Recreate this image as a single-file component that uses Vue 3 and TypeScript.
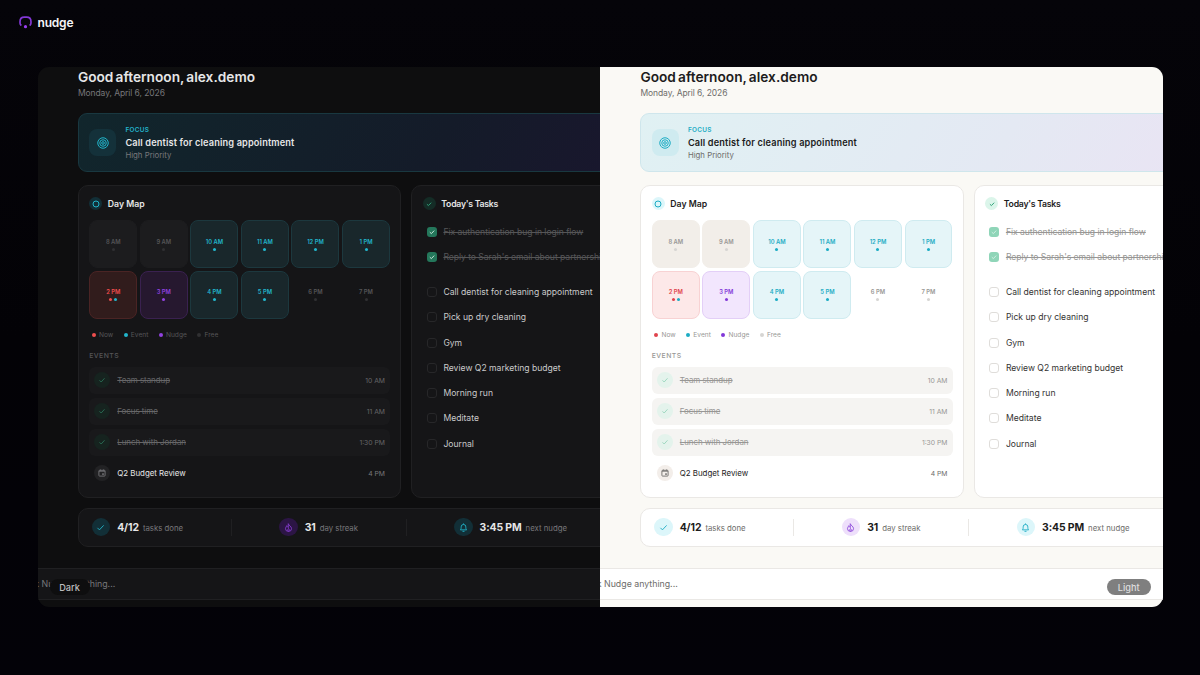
<script setup lang="ts">
interface Slot { label: string; kind: 'past' | 'event' | 'now' | 'nudge' | 'free' }

const themes = ['dark', 'light'] as const

const slots: Slot[] = [
  { label: '8 AM', kind: 'past' },
  { label: '9 AM', kind: 'past' },
  { label: '10 AM', kind: 'event' },
  { label: '11 AM', kind: 'event' },
  { label: '12 PM', kind: 'event' },
  { label: '1 PM', kind: 'event' },
  { label: '2 PM', kind: 'now' },
  { label: '3 PM', kind: 'nudge' },
  { label: '4 PM', kind: 'event' },
  { label: '5 PM', kind: 'event' },
  { label: '6 PM', kind: 'free' },
  { label: '7 PM', kind: 'free' },
]

const legend = [
  { label: 'Now', kind: 'now' },
  { label: 'Event', kind: 'event' },
  { label: 'Nudge', kind: 'nudge' },
  { label: 'Free', kind: 'free' },
]

const events = [
  { title: 'Team standup', time: '10 AM', done: true },
  { title: 'Focus time', time: '11 AM', done: true },
  { title: 'Lunch with Jordan', time: '1:30 PM', done: true },
  { title: 'Q2 Budget Review', time: '4 PM', done: false },
]

const doneTasks = ['Fix authentication bug in login flow', "Reply to Sarah's email about partnership"]
const openTasks = [
  'Call dentist for cleaning appointment',
  'Pick up dry cleaning',
  'Gym',
  'Review Q2 marketing budget',
  'Morning run',
  'Meditate',
  'Journal',
]
</script>

<template>
  <div class="page">
    <header class="brand">
      <svg class="brand-mark" viewBox="0 0 14 14" fill="none">
        <path d="M2 9.7 C1.4 9.2 1.1 8.5 1.1 7.6 V6 C1.1 3 3 1.2 5.7 1.2 H8.3 C11 1.2 12.9 3 12.9 6 V7.6 C12.9 8.5 12.6 9.2 12 9.7" stroke="#8338d6" stroke-width="1.8" stroke-linecap="round" />
        <circle cx="7" cy="11.5" r="1.7" fill="#9a3ff0" />
      </svg>
      <span class="brand-name">nudge</span>
    </header>

    <main class="stage">
      <section v-for="theme in themes" :key="theme" class="panel" :class="theme">
        <div class="content">
          <h1 class="greeting">Good afternoon, alex.demo</h1>
          <p class="date">Monday, April 6, 2026</p>

          <div class="focus">
            <span class="focus-icon">
              <svg viewBox="0 0 24 24" fill="none" stroke="currentColor" stroke-width="2">
                <circle cx="12" cy="12" r="10.5" /><circle cx="12" cy="12" r="6.5" /><circle cx="12" cy="12" r="2.6" />
              </svg>
            </span>
            <div class="focus-text">
              <span class="eyebrow">FOCUS</span>
              <strong class="focus-title">Call dentist for cleaning appointment</strong>
              <span class="focus-sub">High Priority</span>
            </div>
          </div>

          <div class="columns">
            <article class="card">
              <div class="card-head">
                <span class="badge cyan"><svg viewBox="0 0 12 12" fill="none" stroke="currentColor" stroke-width="1"><circle cx="6" cy="6" r="3" /></svg></span>
                <h2>Day Map</h2>
              </div>
              <div class="slots">
                <div v-for="slot in slots" :key="slot.label" class="slot" :class="slot.kind">
                  <span class="slot-label">{{ slot.label }}</span>
                  <span class="dots"><i class="dot" :class="slot.kind"></i><i v-if="slot.kind === 'now'" class="dot event"></i></span>
                </div>
              </div>
              <div class="legend">
                <span v-for="item in legend" :key="item.label" class="legend-item"><i class="dot" :class="item.kind"></i>{{ item.label }}</span>
              </div>
              <h3 class="events-title">EVENTS</h3>
              <ul class="events">
                <li v-for="event in events" :key="event.title" :class="{ done: event.done }">
                  <span class="event-icon">
                    <svg v-if="event.done" viewBox="0 0 16 16" fill="none" stroke="currentColor" stroke-width="1.7"><path d="M3 8.6 6.3 12 13 4.6" /></svg>
                    <svg v-else viewBox="0 0 16 16" fill="none" stroke="currentColor" stroke-width="1.8"><rect x="1.8" y="2.6" width="12.4" height="11.6" rx="1.4" /><path d="M2 4.4H14M4.8 1V3M11.2 1V3" /><rect x="8.4" y="8.6" width="3.2" height="3.2" fill="currentColor" stroke="none" /></svg>
                  </span>
                  <span class="event-title">{{ event.title }}</span>
                  <span class="event-time">{{ event.time }}</span>
                </li>
              </ul>
            </article>

            <article class="card">
              <div class="card-head">
                <span class="badge green"><svg viewBox="0 0 12 12" fill="none" stroke="currentColor" stroke-width="1"><path d="M3.9 6.2 5.4 7.6 8.2 4.7" /></svg></span>
                <h2 class="tight">Today's Tasks</h2>
              </div>
              <ul class="tasks finished">
                <li v-for="task in doneTasks" :key="task">
                  <span class="check on"><svg viewBox="0 0 10 10" fill="none" stroke="currentColor" stroke-width="0.9"><path d="M2.8 5.2 4.4 6.6 7.2 3.6" /></svg></span>
                  <span class="task-text">{{ task }}</span>
                </li>
              </ul>
              <ul class="tasks">
                <li v-for="task in openTasks" :key="task">
                  <span class="check"></span>
                  <span class="task-text">{{ task }}</span>
                </li>
              </ul>
            </article>
          </div>

          <div class="stats">
            <div class="stat">
              <span class="stat-icon cyan"><svg viewBox="0 0 16 16" fill="none" stroke="currentColor" stroke-width="1.6"><path d="M2.6 8.6 6.1 12.2 13.6 4.2" /></svg></span>
              <b>4/12</b><span class="stat-label">tasks done</span>
            </div>
            <i class="divider"></i>
            <div class="stat">
              <span class="stat-icon purple"><svg viewBox="0 0 16 16" fill="none" stroke="currentColor" stroke-width="1.4" stroke-linejoin="round"><path d="M7.6 1.2C8 4.2 13.4 5.8 13.4 10A5.4 5 0 0 1 2.6 10C2.6 7.4 4.6 6.4 5.2 4.6 6.8 5.4 6.2 7.4 7.6 8.2 8.6 6 7.2 3.6 7.6 1.2Z" /><path d="M8 14.8C6 13.4 6.6 11.4 8 9.8 9.6 11.4 10 13.4 8 14.8Z" /></svg></span>
              <b>31</b><span class="stat-label">day streak</span>
            </div>
            <i class="divider"></i>
            <div class="stat">
              <span class="stat-icon cyan"><svg viewBox="0 0 16 16" fill="none" stroke="currentColor" stroke-width="1.6" stroke-linejoin="round"><path d="M2.4 12.2C4 10.8 3.8 9 3.8 7A4.2 4.4 0 0 1 12.2 7C12.2 9 12 10.8 13.6 12.2ZM6.2 14.8H9.8M8 .8V2.6" /></svg></span>
              <b>3:45 PM</b><span class="stat-label">next nudge</span>
            </div>
            <i class="divider"></i>
          </div>
        </div>
        <footer class="ask"><span class="ask-text">Ask Nudge anything...</span></footer>
      </section>
      <span class="tag tag-dark">Dark</span>
      <span class="tag tag-light">Light</span>
    </main>
  </div>
</template>

<style>
body { margin: 0; background: #030207; }
</style>

<style scoped>
* { box-sizing: border-box; }
h1, h2, h3, p, ul { margin: 0; padding: 0; font-weight: inherit; }
ul { list-style: none; }
svg { display: block; }

.page { width: 1200px; height: 675px; overflow: hidden; background: linear-gradient(#050409, #030206 50%, #030208); font-family: Inter, "Open Sans", sans-serif; }
.brand { display: flex; align-items: center; height: 45px; padding-left: 19px; gap: 5.5px; }
.brand-mark { width: 13px; height: 13px; margin-top: -1px; }
.brand-name { color: #f6f5f8; font-size: 12px; font-weight: 600; letter-spacing: -0.2px; }

.stage { position: relative; display: flex; width: 1125px; height: 540.4px; margin: 22px 37.5px 0; border-radius: 11px; overflow: hidden; }
.panel { display: flex; flex-direction: column; width: 562.5px; height: 541px; overflow: hidden; background: var(--bg); color: var(--fg); }

.dark {
  --bg: #0e0e0f; --card: #151517; --line: #202022; --fg: #e6e6e7; --body: #cacacb; --muted: #77777a; --faint: #555557;
  --cyan: #22b5cb; --purple: #9142e0; --red: #ef4e4e; --green: #2f9c76;
  --cyan-bg: #122f37; --purple-bg: #2c1545; --green-bg: #142c26;
  --past: #1c1c1e; --past-line: #1c1c1e; --event: #19272b; --event-line: #1c383e; --now: #311c1c; --now-line: #4a2424; --nudge: #26182f; --nudge-line: #3a2150;
  --idle-dot: #303032; --row: #19191b; --struck: #666668; --event-ic-bg: #222224; --check-line: #272729; --check: #24775b;
  --done-check-bg: #16231f; --done-check: #2b7259; --focus-bg: linear-gradient(120deg, #11262c 0%, #141b29 55%, #1c1430 100%); --focus-line: #193840; --focus-ic: #14313a;
}
.light {
  --bg: #faf9f5; --card: #ffffff; --line: #eae8e5; --fg: #1d1c1c; --body: #343332; --muted: #6e6d6b; --faint: #989795;
  --cyan: #1cacc4; --purple: #8238d8; --red: #e0434c; --green: #33a57b;
  --cyan-bg: #dcf6fa; --purple-bg: #eedffb; --green-bg: #dbf5ea;
  --past: #f2eee9; --past-line: #f2eee9; --event: #e5f5f8; --event-line: #cfebf0; --now: #fde8e8; --now-line: #f8d2d3; --nudge: #f2e6fd; --nudge-line: #e3cff7;
  --idle-dot: #d6d5d3; --row: #f5f4f2; --struck: #989795; --event-ic-bg: #f3eeea; --check-line: #dfddda; --check: #8fd5b8;
  --done-check-bg: #e4f3ec; --done-check: #94d3b9; --focus-bg: linear-gradient(120deg, #e0f1f3 0%, #e4e9f3 55%, #ece1f4 100%); --focus-line: #cfe6ec; --focus-ic: #cfebf0;
}

.content { width: 738px; height: 500.5px; flex: none; padding: 0 40.4px; }
.greeting { height: 18px; line-height: 21px; font-size: 13.7px; font-weight: 600; word-spacing: -1.2px; white-space: nowrap; }
.date { height: 16px; margin-top: 1px; line-height: 15px; font-size: 8.5px; letter-spacing: -0.08px; color: var(--muted); }

.focus { display: flex; align-items: center; height: 59px; margin-top: 11.2px; padding-left: 10.5px; border: 1px solid var(--focus-line); border-radius: 9px; background: var(--focus-bg); }
.focus-icon { display: grid; place-items: center; width: 27px; height: 27px; border-radius: 8px; background: var(--focus-ic); color: var(--cyan); }
.focus-icon svg { width: 12px; height: 12px; }
.focus-text { display: flex; flex-direction: column; margin: -1px 0 0 9px; }
.eyebrow { margin-top: 1px; line-height: 10px; font-size: 6.4px; font-weight: 600; letter-spacing: 0.35px; color: var(--cyan); }
.focus-title { line-height: 15px; font-size: 9.2px; font-weight: 600; letter-spacing: 0.15px; }
.focus-sub { line-height: 10px; font-size: 7.8px; color: var(--muted); }

.columns { display: grid; grid-template-columns: 323.5px 323.5px; gap: 10px; margin-top: 13px; }
.card { height: 312.5px; padding: 10.4px; border: 1px solid var(--line); border-radius: 10px; background: var(--card); overflow: hidden; }
.card-head { display: flex; align-items: center; height: 14px; gap: 5.5px; }
.card-head h2 { font-size: 8.7px; font-weight: 600; }
.card-head .tight { letter-spacing: -0.25px; }
.badge { display: grid; place-items: center; width: 13px; height: 13px; border-radius: 50%; }
.badge svg { width: 12px; height: 12px; }
.cyan { color: var(--cyan); background: var(--cyan-bg); }
.green { color: var(--green); background: var(--green-bg); }
.purple { color: var(--purple); background: var(--purple-bg); }

.slots { display: grid; grid-template-columns: repeat(6, 1fr); gap: 2.6px; margin-top: 9.5px; }
.slot { display: flex; flex-direction: column; align-items: center; height: 48px; padding-top: 16.5px; border: 1px solid transparent; border-radius: 8px; }
.slot-label { line-height: 8px; font-size: 5.8px; font-weight: 600; color: var(--faint); }
.slot.past { background: var(--past); border-color: var(--past-line); }
.slot.event { background: var(--event); border-color: var(--event-line); }
.slot.now { background: var(--now); border-color: var(--now-line); }
.slot.nudge { background: var(--nudge); border-color: var(--nudge-line); }
.slot.event .slot-label { color: var(--cyan); }
.slot.now .slot-label { color: var(--red); }
.slot.nudge .slot-label { color: var(--purple); }
.dots { display: flex; gap: 2px; margin-top: 2px; }
.dot { width: 3px; height: 3px; border-radius: 50%; background: var(--idle-dot); }
.dot.event { background: var(--cyan); }
.dot.now { background: var(--red); }
.dot.nudge { background: var(--purple); }

.legend { display: flex; gap: 10.6px; height: 10px; margin-top: 11px; padding-left: 2.6px; }
.legend-item { display: flex; align-items: center; gap: 3.1px; font-size: 6.6px; color: var(--faint); }
.legend .dot { width: 4px; height: 4px; }
.events-title { height: 10px; margin-top: 11.5px; line-height: 10px; font-size: 6.8px; font-weight: 500; letter-spacing: 0.45px; color: var(--faint); }
.events { display: grid; gap: 4.5px; margin-top: 6px; }
.events li { display: flex; align-items: center; height: 26.5px; padding: 0 5px; border-radius: 6px; }
.events li.done { background: var(--row); }
.event-icon { display: grid; place-items: center; width: 16px; height: 16px; border-radius: 50%; background: var(--event-ic-bg); color: var(--muted); }
.event-icon svg { width: 8px; height: 8px; }
.done .event-icon { background: var(--done-check-bg); color: var(--done-check); }
.event-title { flex: 1; margin-left: 7px; font-size: 7.9px; letter-spacing: -0.02px; }
.done .event-title { color: var(--struck); text-decoration: line-through; }
.event-time { font-size: 6.8px; color: var(--muted); }
.done .event-time { color: var(--struck); }

.tasks { padding-left: 3.8px; }
.tasks li { display: flex; align-items: center; height: 25.25px; }
.tasks.finished { margin: 8.8px 0 9.6px; }
.check { display: grid; place-items: center; flex: none; width: 10px; height: 10px; border: 1px solid var(--check-line); border-radius: 3px; }
.check.on { border: 0; background: var(--check); color: #d5efe4; }
.check.on svg { width: 10px; height: 10px; }
.task-text { margin-left: 6.8px; font-size: 8.6px; color: var(--body); white-space: nowrap; }
.finished .task-text { color: var(--faint); letter-spacing: -0.04px; text-decoration: line-through; }

.stats { display: flex; align-items: center; gap: 47.5px; height: 39px; margin-top: 10px; padding-left: 12.8px; border: 1px solid var(--line); border-radius: 10px; background: var(--card); overflow: hidden; }
.stat { display: flex; align-items: center; flex: none; white-space: nowrap; }
.stat-icon { display: grid; place-items: center; width: 18.5px; height: 18.5px; border-radius: 50%; }
.stat-icon svg { width: 9px; height: 9px; }
.stat b { margin-left: 7px; font-size: 10.4px; font-weight: 700; letter-spacing: -0.1px; }
.stat-label { margin: 1.5px 0 0 4px; font-size: 7.8px; color: var(--muted); }
.divider { flex: none; width: 1px; height: 17px; background: var(--line); }

.ask { flex: none; height: 32px; border: solid var(--line); border-width: 1px 0; background: var(--card); }
.ask-text { display: block; margin-left: -14px; line-height: 29px; font-size: 8.8px; color: var(--muted); white-space: nowrap; }

.tag { position: absolute; bottom: 12px; height: 16.5px; border-radius: 9px; line-height: 17px; font-size: 9.2px; font-weight: 500; text-align: center; }
.tag-dark { left: 12px; width: 40px; background: #0e0e0f; color: #bdbdbe; }
.tag-light { right: 12px; width: 43.5px; background: #7f7f7f; color: #dedede; }
</style>
